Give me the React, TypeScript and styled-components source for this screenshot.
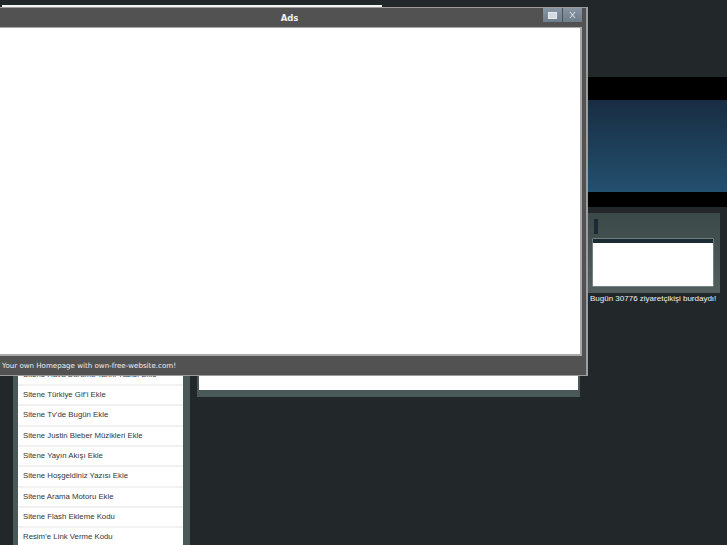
import React from 'react'
import styled, { createGlobalStyle } from 'styled-components'

const PAGE_BG = '#222729'
const RIM = '#4b5858'

const GlobalStyle = createGlobalStyle`
  html, body {
    margin: 0;
    padding: 0;
    background: ${PAGE_BG};
    font-family: 'Liberation Sans', Arial, sans-serif;
  }
`

const Page = styled.div`
  position: relative;
  width: 727px;
  height: 545px;
  overflow: hidden;
`

const TopStrip = styled.div`
  height: 77px;
  padding: 5px 0 0 2px;
  box-sizing: border-box;
`

const TopLine = styled.div`
  width: 380px;
  height: 2px;
  background: #f4f4f4;
`

const BlackBand = styled.div<{ h: number }>`
  height: ${(p) => p.h}px;
  background: #000;
`

const BlueBand = styled.div`
  height: 92px;
  background: linear-gradient(#182d42, #23506f);
`

const Columns = styled.div`
  display: flex;
  align-items: flex-start;
  padding-left: 13px;
`

const Sidebar = styled.div`
  flex-shrink: 0;
  width: 177px;
  box-sizing: border-box;
  border-left: 5px solid ${RIM};
  border-right: 7px solid ${RIM};
  background: #fff;
  padding-top: 16.3px;
  height: 400px;
`

const LinkList = styled.ul`
  list-style: none;
  margin: 0;
  padding: 0;
`

const LinkItem = styled.li`
  height: 18.33px;
  line-height: 18.33px;
  border-bottom: 2px solid #f1f1f1;
  padding-left: 5px;
  font-size: 7.8px;
  color: #30363d;
  white-space: nowrap;
`

const Main = styled.div`
  flex-shrink: 0;
  margin-left: 7px;
  width: 383px;
  height: 190px;
  box-sizing: border-box;
  border: 2px solid ${RIM};
  border-top: 0;
  border-bottom-width: 7px;
  background: #fff;
`

const RightColumn = styled.div`
  flex-shrink: 0;
  margin-left: 8px;
  width: 132px;
  padding-top: 6px;
`

const CounterBox = styled.div`
  height: 80px;
  box-sizing: border-box;
  padding: 6px 7px 7px 5px;
  background: linear-gradient(#3c4949, #525e5e);
  display: flex;
  flex-direction: column;
`

const CounterMark = styled.div`
  width: 3.5px;
  height: 15px;
  margin-left: 1px;
  background: #1b2a33;
`

const CounterScreen = styled.div`
  margin-top: 5px;
  flex: 1;
  border-top: 4px solid #1b2a33;
  background: #fff;
  box-shadow: 0 0 0 0.5px #9aa;
`

const VisitorText = styled.div`
  margin: 1px 0 0 2px;
  font-size: 8px;
  line-height: 9px;
  color: #f2f2f2;
  white-space: nowrap;
`

const AdWindow = styled.div`
  position: absolute;
  left: -3px;
  top: 7px;
  width: 591px;
  height: 369px;
  box-sizing: border-box;
  border: 1px solid #9d9d9d;
  border-right-width: 2px;
  background: #525252;
  display: flex;
  flex-direction: column;
`

const TitleBar = styled.div`
  position: relative;
  height: 19px;
  flex-shrink: 0;
  display: flex;
  align-items: center;
  justify-content: center;
  font-family: 'DejaVu Sans', sans-serif;
  font-weight: bold;
  font-size: 8.5px;
  color: #f0f0f0;
  padding-right: 5px;
`

const Controls = styled.div`
  position: absolute;
  right: 4px;
  top: 0;
  display: flex;
  gap: 1px;
`

const ControlButton = styled.div`
  width: 19px;
  height: 14px;
  display: flex;
  align-items: center;
  justify-content: center;
  background: linear-gradient(#8896a3, #6f7c89);
`

const AdBody = styled.div`
  flex: 1;
  margin-right: 4px;
  background: #fff;
  border: 2px solid #a9a9a9;
  border-top-width: 1px;
`

const Footer = styled.div`
  height: 19px;
  flex-shrink: 0;
  display: flex;
  align-items: center;
  padding-left: 4px;
  font-family: 'DejaVu Sans', sans-serif;
  font-size: 7.1px;
  color: #f0f0f0;
`

const links = [
  'Sitene Saat Ekle',
  'Sitene Takvim Ekle',
  'Sitene Müzik Ekle',
  'Sitene Kar Yağdır',
  'Sitene Sohbet Ekle',
  'Sitene Ziyaretçi Sayacı Ekle',
  'Sitene Radyo Ekle',
  'Sitene Hava Durumu Tarihi Yazısı Ekle',
  'Sitene Türkiye Gif\u2019i Ekle',
  'Sitene Tv\u2019de Bugün Ekle',
  'Sitene Justin Bieber Müzikleri Ekle',
  'Sitene Yayın Akışı Ekle',
  'Sitene Hoşgeldiniz Yazısı Ekle',
  'Sitene Arama Motoru Ekle',
  'Sitene Flash Ekleme Kodu',
  'Resim\u2019e Link Verme Kodu',
]

const App: React.FC = () => {
  return (
    <>
      <GlobalStyle />
      <Page>
        <TopStrip>
          <TopLine />
        </TopStrip>
        <BlackBand h={23} />
        <BlueBand />
        <BlackBand h={15} />
        <Columns>
          <Sidebar>
            <LinkList>
              {links.map((link) => (
                <LinkItem key={link}>{link}</LinkItem>
              ))}
            </LinkList>
          </Sidebar>
          <Main />
          <RightColumn>
            <CounterBox>
              <CounterMark />
              <CounterScreen />
            </CounterBox>
            <VisitorText>Bugün 30776 ziyaretçikişi burdaydı!</VisitorText>
          </RightColumn>
        </Columns>

        <AdWindow>
          <TitleBar>
            Ads
            <Controls>
              <ControlButton>
                <svg width="9" height="7" viewBox="0 0 9 7">
                  <rect x="0.5" y="0.5" width="8" height="6" fill="#d6dbe1" stroke="#e6e9ec" />
                </svg>
              </ControlButton>
              <ControlButton>
                <svg width="7" height="8" viewBox="0 0 7 8">
                  <path d="M1 1 L6 7 M6 1 L1 7" stroke="#d4d9de" strokeWidth="1.1" />
                </svg>
              </ControlButton>
            </Controls>
          </TitleBar>
          <AdBody />
          <Footer>Your own Homepage with own-free-website.com!</Footer>
        </AdWindow>
      </Page>
    </>
  )
}

export default App
